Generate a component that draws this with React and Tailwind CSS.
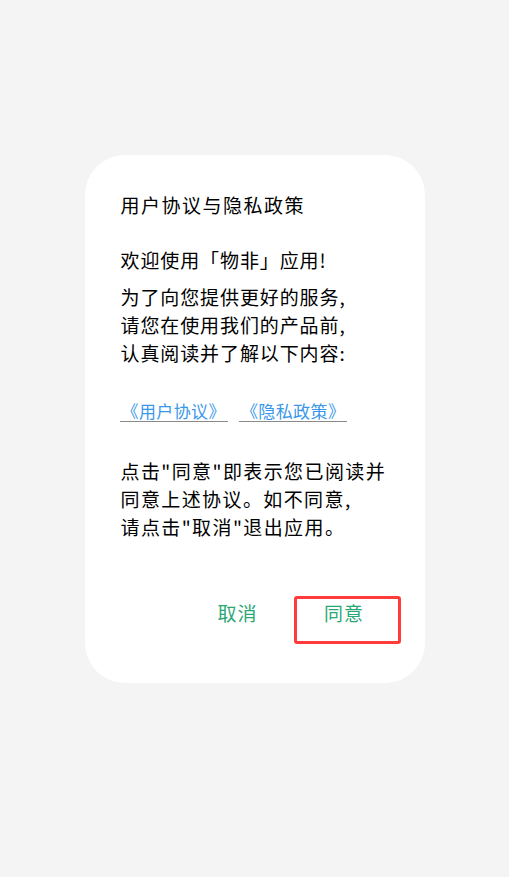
export default function App() {
  const font = { fontFamily: '"Noto Sans CJK SC", "Noto Sans", sans-serif' };

  return (
    <div className="min-h-screen w-full bg-[#f4f4f4] pt-[155px]" style={font}>
      {/* Dialog card */}
      <div className="mx-auto flex h-[528px] w-[340px] flex-col rounded-[40px] bg-white pl-9 pr-6 pt-9 pb-[39px] text-black">
        <h1 className="text-[19px] leading-[28px] tracking-[1.5px]">用户协议与隐私政策</h1>

        <p className="mt-[27px] text-[19px] leading-[28px] tracking-[0.9px]">欢迎使用「物非」应用!</p>

        <p className="mt-[9px] text-[19px] leading-[28px] tracking-[0.9px]">
          为了向您提供更好的服务,
          <br />
          请您在使用我们的产品前,
          <br />
          认真阅读并了解以下内容:
        </p>

        <div className="-ml-px mt-[34px] flex gap-[11px] text-[17px] leading-[20px] tracking-[0.4px] text-[#3a98ea]">
          <a className="border-b border-[#8a8a8a] px-[2px]">《用户协议》</a>
          <a className="border-b border-[#8a8a8a] px-[2px]">《隐私政策》</a>
        </div>

        <p className="mt-[35px] text-[19px] leading-[28px] tracking-[1.4px]">
          点击"同意"即表示您已阅读并
          <br />
          同意上述协议。如不同意,
          <br />
          请点击"取消"退出应用。
        </p>

        <div className="mt-auto flex items-start justify-end text-[19px] leading-[28px] tracking-[1px] text-[#2aa774]">
          <button className="pt-[3px]">取消</button>
          <button className="ml-[36px] h-[48px] w-[107px] rounded-[3px] border-[3px] border-[#ff3b3b] pb-[14px] pr-[6px]">
            同意
          </button>
        </div>
      </div>
    </div>
  );
}
